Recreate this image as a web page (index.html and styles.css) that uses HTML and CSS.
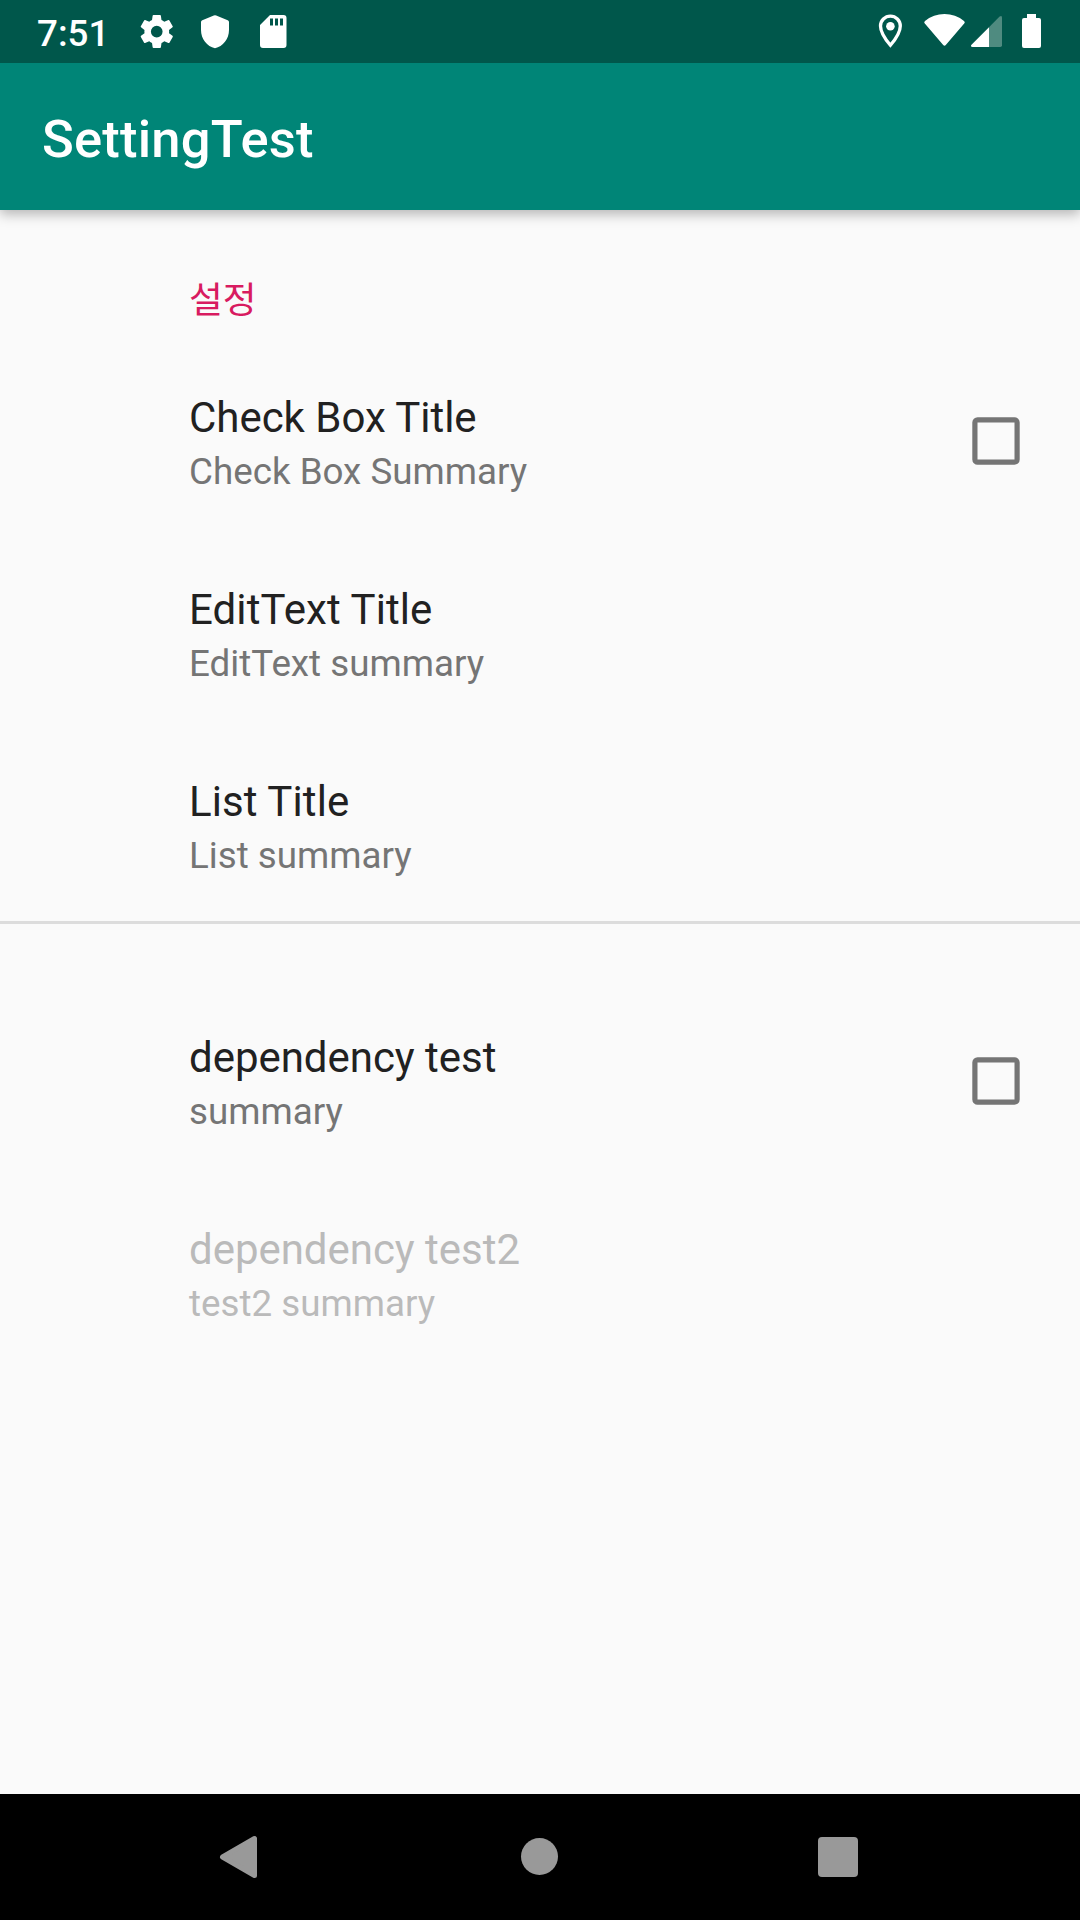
FILE: index.html
```html
<!DOCTYPE html>
<html lang="ko">
<head>
<meta charset="utf-8">
<title>SettingTest</title>
<link rel="stylesheet" href="styles.css">
</head>
<body>
<div class="status">
  <span class="clock">7:51</span>
  <svg width="160" height="63" viewBox="138 0 160 63" fill="#fff">
    <path transform="translate(136.1 10.9) scale(1.72)" d="M19.14 12.94c.04-.3.06-.61.06-.94s-.02-.64-.07-.94l2.03-1.58a.49.49 0 0 0 .12-.61l-1.92-3.32a.49.49 0 0 0-.59-.22l-2.39.96a7 7 0 0 0-1.62-.94l-.36-2.54A.48.48 0 0 0 13.92 2.4h-3.84a.48.48 0 0 0-.47.41l-.36 2.54a7 7 0 0 0-1.62.94l-2.39-.96a.48.48 0 0 0-.59.22L2.74 8.87a.48.48 0 0 0 .12.61l2.03 1.58a6 6 0 0 0 0 1.88l-2.03 1.58a.49.49 0 0 0-.12.61l1.92 3.32c.12.22.37.29.59.22l2.39-.96c.5.38 1.03.7 1.62.94l.36 2.54c.05.24.24.41.48.41h3.84c.24 0 .44-.17.47-.41l.36-2.54a7 7 0 0 0 1.62-.94l2.39.96c.22.08.47 0 .59-.22l1.92-3.32a.48.48 0 0 0-.12-.61zM12 15.4a3.4 3.4 0 1 1 0-6.8 3.4 3.4 0 0 1 0 6.8z"/>
    <path d="M213.8 15.6Q215 15 216.2 15.6L227.7 20.3Q229 20.8 229 22V30C229 39 223 46.5 215 48.2C207 46.5 201 39 201 30V22Q201 20.8 202.3 20.3Z"/>
    <path fill-rule="evenodd" d="M270 15h13.5q3 0 3 3v27q0 3-3 3H263q-3 0-3-3V25zM270 18.5v7h3v-7zm5 0v7h3v-7zm5 0v7h3v-7z"/>
  </svg>
  <svg class="status-right" width="180" height="63" viewBox="870 0 180 63" fill="#fff">
    <path d="M890.4 16.1a9.9 9.9 0 0 0-9.9 9.9c0 5.8 4.2 12.6 9.9 19.3 5.7-6.7 9.9-13.5 9.9-19.3a9.9 9.9 0 0 0-9.9-9.9z" fill="none" stroke="#fff" stroke-width="3.3"/>
    <circle cx="890.4" cy="26.3" r="4.3"/>
    <path d="M943.2 45Q944.5 46.4 945.8 45L964.4 23.3Q965.4 22 964 20.9Q955.5 14 944.5 14Q933.5 14 925 20.9Q923.6 22 924.6 23.3Z"/>
    <path fill="#4f8b80" d="M989 27.2L999.6 16.6Q1002 15 1002 17.5V45.3Q1002 47 1000.3 47H989z"/>
    <path d="M989 27.2V47H972.5Q970 46.6 971.5 44.7z"/>
    <path d="M1027 14h9v4h3q2 0 2 2v26q0 2-2 2h-15q-2 0-2-2V20q0-2 2-2h3z"/>
  </svg>
</div>
<header class="app-bar">SettingTest</header>
<main>
  <h2 class="category">설정</h2>
  <div class="row"><div><div class="title">Check Box Title</div><div class="summary">Check Box Summary</div></div><svg class="check" viewBox="0 0 48 48"><rect x="2.9" y="2.9" width="42.2" height="42.2" rx="2.7"/></svg></div>
  <div class="row"><div><div class="title roomy">EditText Title</div><div class="summary">EditText summary</div></div></div>
  <div class="row last"><div><div class="title roomy">List Title</div><div class="summary">List summary</div></div></div>
  <div class="divider"></div>
  <div class="row"><div><div class="title">dependency test</div><div class="summary">summary</div></div><svg class="check" viewBox="0 0 48 48"><rect x="2.9" y="2.9" width="42.2" height="42.2" rx="2.7"/></svg></div>
  <div class="row disabled"><div><div class="title">dependency test2</div><div class="summary">test2 summary</div></div></div>
</main>
<nav class="nav">
  <svg width="1080" height="126" viewBox="0 0 1080 126" fill="#999"><path d="M254.5 44.5v37L222.5 63z" stroke="#999" stroke-width="5" stroke-linejoin="round"/><circle cx="539.5" cy="62.5" r="18.5"/><rect x="818" y="43" width="40" height="40" rx="4"/></svg>
</nav>
</body>
</html>
```
FILE: styles.css
```css
* { box-sizing: border-box; }
body { margin: 0; width: 1080px; height: 1920px; display: flex; flex-direction: column; background: #fafafa; font-family: Roboto, "Noto Sans CJK KR", sans-serif; overflow: hidden; }
svg { display: block; }
.status { height: 63px; background: #00574b; display: flex; align-items: center; padding: 0 30px 0 37px; color: #fff; }
.clock { width: 101px; padding-top: 3px; font-size: 36.75px; font-weight: 500; }
.status-right { margin-left: auto; }
.app-bar { height: 147px; background: #008577; color: #fff; display: flex; align-items: center; padding: 4px 42px 0; font-size: 52.5px; font-weight: 500; letter-spacing: .2px; box-shadow: 0 4px 12px rgba(0,0,0,.29); clip-path: inset(0 0 -20px 0); }
main { flex: 1; }
.category { margin: 0; height: 150px; padding: 66px 0 0 189px; font-size: 36.75px; line-height: 50px; font-weight: 400; color: #d81b60; }
.row { height: 192px; display: flex; justify-content: space-between; align-items: flex-start; padding: 29px 60px 0 189px; }
.row.last { height: 177px; }
.title { font-size: 42px; line-height: 57px; letter-spacing: -.03px; color: #212121; }
.title.roomy { letter-spacing: .1px; }
.summary { margin-top: 1px; font-size: 36.75px; line-height: 50px; color: #757575; }
.check { width: 48px; height: 48px; margin-top: 28px; fill: none; stroke: #757575; stroke-width: 5.2px; }
.divider { height: 79px; border-top: 3px solid #dcdcdc; }
.disabled .title, .disabled .summary { color: #bababa; }
.nav { height: 126px; background: #000; }
```
